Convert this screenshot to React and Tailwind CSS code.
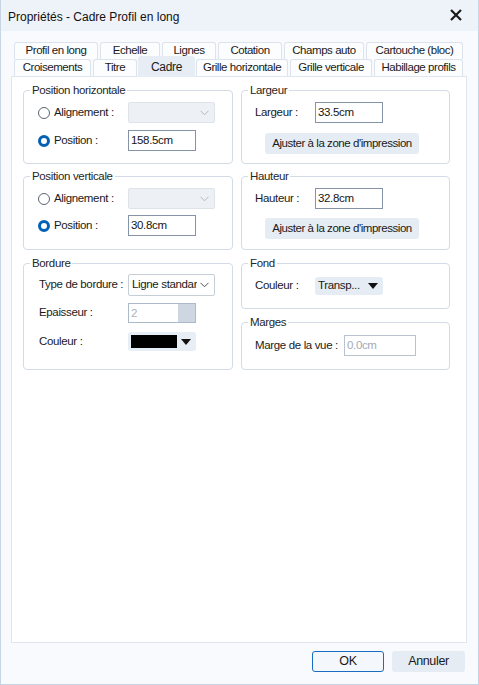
import React from "react";

const F = "font-['Liberation_Sans',Arial,sans-serif]";

function Chevron({ color = "#9aa3ad" }) {
  return (
    <svg width="9" height="6" viewBox="0 0 9 6">
      <path d="M0.5 0.8 L4.5 4.8 L8.5 0.8" fill="none" stroke={color} strokeWidth="1" />
    </svg>
  );
}

function Tri() {
  return (
    <svg width="10" height="6" viewBox="0 0 10 6">
      <path d="M0 0 H10 L5 6 Z" fill="#111" />
    </svg>
  );
}

function Radio({ checked }) {
  return checked ? (
    <span className="w-[12px] h-[12px] rounded-full border-[3px] border-[#0061b5] bg-white shrink-0" />
  ) : (
    <span className="w-[12px] h-[12px] rounded-full border border-[#5d6570] bg-white shrink-0" />
  );
}

function Group({ title, className = "", children }) {
  return (
    <fieldset className={`border border-[#d3dbe6] rounded-[4px] min-w-0 ${className}`}>
      <legend className="ml-[6px] px-[2px] leading-[14px] text-[#262626]">{title}</legend>
      {children}
    </fieldset>
  );
}

function DisabledSelect() {
  return (
    <div className="w-[87px] h-[21px] bg-[#edf0f4] border border-[#dee3ea] rounded-[2px] flex items-center justify-end pr-[5px]">
      <Chevron color="#b3bac3" />
    </div>
  );
}

function TextInput({ value, w = "w-[68px]", border = "border-[#8493a5]", color = "text-[#151515]" }) {
  return (
    <div className={`${w} h-[21px] bg-white border ${border} flex items-center pl-[2px] ${color}`}>
      {value}
    </div>
  );
}

function Tab({ label, w, selected }) {
  if (selected) {
    return (
      <div
        className={`${w} h-[21px] -mb-[1px] relative z-10 bg-[#e6edf5] rounded-t-[3px] flex items-start justify-center pt-[2px] text-[12px] tracking-[-0.3px]`}
      >
        {label}
      </div>
    );
  }
  return (
    <div
      className={`${w} h-[17px] bg-[#fcfdfe] border-t border-x border-[#dce3ec] rounded-t-[3px] flex items-center justify-center text-[11.5px] tracking-[-0.45px] mr-[2px]`}
    >
      {label}
    </div>
  );
}

function Button({ children, w, primary }) {
  return (
    <div
      className={`${w} h-[21px] rounded-[3px] flex items-center justify-center text-[12.5px] ${
        primary ? "border border-[#1a6cc0] bg-[#f4f7fb]" : "bg-[#e5ecf4]"
      }`}
    >
      {children}
    </div>
  );
}

export default function App() {
  return (
    <div
      className={`${F} w-[479px] h-[685px] bg-[#f8fafd] border-x border-b border-[#c6d4e4] flex flex-col text-[11.5px] text-[#1a1a1a] tracking-[-0.35px]`}
    >
      {/* Title bar */}
      <div className="h-[31px] bg-[#eef3f9] flex items-center justify-between pl-[7px] pr-[16px] shrink-0">
        <span className="text-[12px] tracking-[0px] pt-[3px] text-[#111]">Propriétés - Cadre Profil en long</span>
        <svg width="12" height="12" viewBox="0 0 12 12" className="-mt-[1px]">
          <path d="M1 1 L11 11 M11 1 L1 11" stroke="#1a1a1a" strokeWidth="2.2" />
        </svg>
      </div>

      {/* Tabs */}
      <div className="pt-[11px] pl-[13px] shrink-0">
        <div className="flex items-end h-[17px]">
          <Tab label="Profil en long" w="w-[84px]" />
          <Tab label="Echelle" w="w-[60px]" />
          <Tab label="Lignes" w="w-[54px]" />
          <Tab label="Cotation" w="w-[64px]" />
          <Tab label="Champs auto" w="w-[80px]" />
          <Tab label="Cartouche (bloc)" w="w-[97px]" />
        </div>
        <div className="flex items-end h-[17px]">
          <Tab label="Croisements" w="w-[77px]" />
          <Tab label="Titre" w="w-[44px]" />
          <div className="-ml-[1px] mr-[1px]">
            <Tab label="Cadre" w="w-[57px]" selected />
          </div>
          <Tab label="Grille horizontale" w="w-[92px]" />
          <Tab label="Grille verticale" w="w-[82px]" />
          <Tab label="Habillage profils" w="w-[89px]" />
        </div>
      </div>

      {/* Panel */}
      <div className="ml-[10px] w-[456px] h-[567px] bg-white border border-[#dfe6ef] shrink-0 flex gap-[8px] pl-[11px] pt-[6px]">
        {/* Left column */}
        <div className="w-[210px] flex flex-col">
          <Group title="Position horizontale" className="h-[81px]">
            <div className="pl-[14px] pt-[5px] flex flex-col gap-[7px]">
              <div className="flex items-center h-[21px]">
                <div className="w-[90px] flex items-center gap-[4px]">
                  <Radio />
                  <span>Alignement :</span>
                </div>
                <DisabledSelect />
              </div>
              <div className="flex items-center h-[21px]">
                <div className="w-[90px] flex items-center gap-[4px]">
                  <Radio checked />
                  <span>Position :</span>
                </div>
                <TextInput value="158.5cm" />
              </div>
            </div>
          </Group>

          <Group title="Position verticale" className="h-[81px] mt-[5px]">
            <div className="pl-[14px] pt-[5px] flex flex-col gap-[6px]">
              <div className="flex items-center h-[21px]">
                <div className="w-[90px] flex items-center gap-[4px]">
                  <Radio />
                  <span>Alignement :</span>
                </div>
                <DisabledSelect />
              </div>
              <div className="flex items-center h-[21px]">
                <div className="w-[90px] flex items-center gap-[4px]">
                  <Radio checked />
                  <span>Position :</span>
                </div>
                <TextInput value="30.8cm" />
              </div>
            </div>
          </Group>

          <Group title="Bordure" className="h-[114px] mt-[6px]">
            <div className="pl-[15px] pt-[4px] flex flex-col">
              <div className="flex items-center h-[22px]">
                <span className="w-[89px]">Type de bordure :</span>
                <div className="w-[87px] h-[22px] bg-white border border-[#c6ced8] rounded-[2px] flex items-center justify-between pl-[3px] pr-[5px]">
                  <span className="whitespace-nowrap overflow-hidden">Ligne standar</span>
                  <Chevron color="#555" />
                </div>
              </div>
              <div className="flex items-center h-[20px] mt-[7px]">
                <span className="w-[89px]">Epaisseur :</span>
                <div className="w-[68px] h-[20px] border border-[#acb9c8] bg-white flex">
                  <span className="flex-1 pl-[2px] text-[#a9b1bb] leading-[18px]">2</span>
                  <span className="w-[17px] h-full bg-[#cdd6e1]" />
                </div>
              </div>
              <div className="flex items-center h-[19px] mt-[9px]">
                <span className="w-[89px]">Couleur :</span>
                <div className="w-[68px] h-[19px] bg-[#e8eef5] rounded-[3px] flex items-center pl-[3px] pr-[5px] justify-between">
                  <span className="w-[46px] h-[13px] bg-black" />
                  <Tri />
                </div>
              </div>
            </div>
          </Group>
        </div>

        {/* Right column */}
        <div className="w-[209px] flex flex-col">
          <Group title="Largeur" className="h-[81px]">
            <div className="pl-[13px] pt-[5px] flex flex-col">
              <div className="flex items-center h-[21px]">
                <span className="w-[60px]">Largeur :</span>
                <TextInput value="33.5cm" border="border-[#8493a5]" />
              </div>
              <div className="ml-[10px] mt-[10px] w-[154px] h-[21px] bg-[#e5ecf4] rounded-[3px] flex items-center justify-center tracking-[-0.45px]">
                Ajuster à la zone d'impression
              </div>
            </div>
          </Group>

          <Group title="Hauteur" className="h-[81px] mt-[5px]">
            <div className="pl-[13px] pt-[5px] flex flex-col">
              <div className="flex items-center h-[21px]">
                <span className="w-[60px]">Hauteur :</span>
                <TextInput value="32.8cm" border="border-[#8493a5]" />
              </div>
              <div className="ml-[10px] mt-[9px] w-[154px] h-[21px] bg-[#e5ecf4] rounded-[3px] flex items-center justify-center tracking-[-0.45px]">
                Ajuster à la zone d'impression
              </div>
            </div>
          </Group>

          <Group title="Fond" className="h-[53px] mt-[6px]">
            <div className="pl-[13px] pt-[7px] flex items-center">
              <span className="w-[60px]">Couleur :</span>
              <div className="w-[68px] h-[18px] bg-[#e5ecf4] rounded-[3px] flex items-center justify-between pl-[3px] pr-[5px]">
                <span>Transp...</span>
                <Tri />
              </div>
            </div>
          </Group>

          <Group title="Marges" className="h-[55px] mt-[6px]">
            <div className="pl-[13px] pt-[6px] flex items-center">
              <span className="w-[89px]">Marge de la vue :</span>
              <TextInput value="0.0cm" w="w-[72px]" border="border-[#b8c3cf]" color="text-[#a3abb6]" />
            </div>
          </Group>
        </div>
      </div>

      {/* Footer */}
      <div className="flex justify-end gap-[8px] pr-[13px] mt-[8px]">
        <Button w="w-[72px]" primary>OK</Button>
        <Button w="w-[73px]">Annuler</Button>
      </div>
    </div>
  );
}
